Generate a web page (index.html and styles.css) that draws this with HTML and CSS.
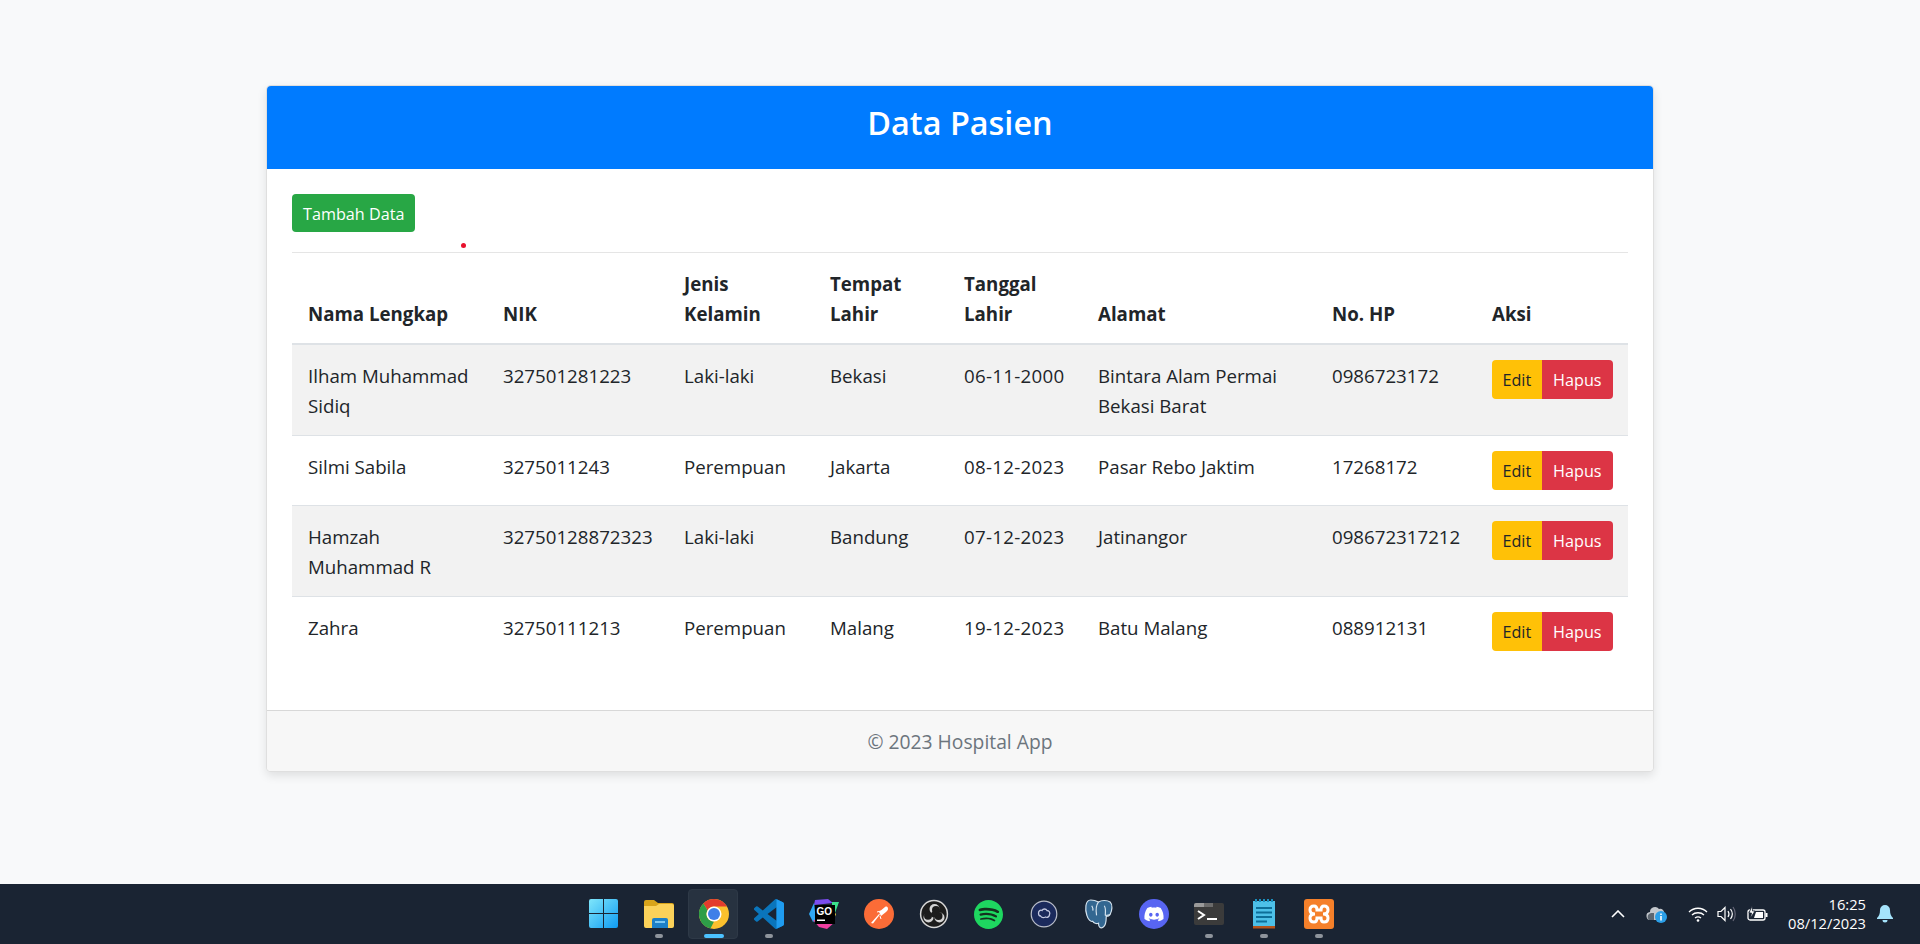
FILE: index.html

```html
<!DOCTYPE html>
<html lang="en">
<head>
  <meta charset="UTF-8">
  <meta name="viewport" content="width=device-width, initial-scale=1.0">
  <title>Data Pasien</title>
  <link rel="stylesheet" href="styles.css">
</head>
<body>
  <main class="content">
    <section class="card">
      <header class="card-header">
        <h2>Data Pasien</h2>
      </header>
      <div class="card-body">
        <a class="btn btn-success" href="#">Tambah Data</a>
        <hr class="divider">
        <table class="data-table">
          <colgroup>
            <col class="col-nama">
            <col class="col-nik">
            <col class="col-jk">
            <col class="col-tempat">
            <col class="col-tanggal">
            <col class="col-alamat">
            <col class="col-hp">
            <col class="col-aksi">
          </colgroup>
          <thead>
            <tr>
              <th>Nama Lengkap</th>
              <th>NIK</th>
              <th>Jenis Kelamin</th>
              <th>Tempat Lahir</th>
              <th>Tanggal Lahir</th>
              <th>Alamat</th>
              <th>No. HP</th>
              <th>Aksi</th>
            </tr>
          </thead>
          <tbody>
            <tr>
              <td>Ilham Muhammad Sidiq</td>
              <td>327501281223</td>
              <td>Laki-laki</td>
              <td>Bekasi</td>
              <td class="tanggal">06-11-2000</td>
              <td>Bintara Alam Permai Bekasi Barat</td>
              <td>0986723172</td>
              <td class="actions"><div class="btn-group"><a class="btn btn-warning" href="#">Edit</a><a class="btn btn-danger" href="#">Hapus</a></div></td>
            </tr>
            <tr>
              <td>Silmi Sabila</td>
              <td>3275011243</td>
              <td>Perempuan</td>
              <td>Jakarta</td>
              <td class="tanggal">08-12-2023</td>
              <td>Pasar Rebo Jaktim</td>
              <td>17268172</td>
              <td class="actions"><div class="btn-group"><a class="btn btn-warning" href="#">Edit</a><a class="btn btn-danger" href="#">Hapus</a></div></td>
            </tr>
            <tr>
              <td>Hamzah Muhammad R</td>
              <td>32750128872323</td>
              <td>Laki-laki</td>
              <td>Bandung</td>
              <td class="tanggal">07-12-2023</td>
              <td>Jatinangor</td>
              <td>098672317212</td>
              <td class="actions"><div class="btn-group"><a class="btn btn-warning" href="#">Edit</a><a class="btn btn-danger" href="#">Hapus</a></div></td>
            </tr>
            <tr>
              <td>Zahra</td>
              <td>32750111213</td>
              <td>Perempuan</td>
              <td>Malang</td>
              <td class="tanggal">19-12-2023</td>
              <td>Batu Malang</td>
              <td>088912131</td>
              <td class="actions"><div class="btn-group"><a class="btn btn-warning" href="#">Edit</a><a class="btn btn-danger" href="#">Hapus</a></div></td>
            </tr>
          </tbody>
        </table>
      </div>
      <footer class="card-footer">© 2023 Hospital App</footer>
    </section>
  </main>

  <span class="cursor-dot"></span>

  <footer class="taskbar">
    <div class="apps">
      <div class="app">
        <svg viewBox="0 0 30 30" width="30" height="30">
          <defs>
            <linearGradient id="win" x1="0" y1="0" x2="1" y2="1"><stop offset="0" stop-color="#7fe6fb"/><stop offset="1" stop-color="#0f9bf2"/></linearGradient>
          </defs>
          <path fill="url(#win)" d="M2 0h12v14H0V2a2 2 0 0 1 2-2zM15 0h12a2 2 0 0 1 2 2v12H15zM0 15h14v14H2a2 2 0 0 1-2-2zM15 15h14v12a2 2 0 0 1-2 2H15z"/>
        </svg>
      </div>
      <div class="app has-pip">
        <svg viewBox="0 0 32 30" width="32" height="30">
          <path fill="#d9a41a" d="M1 3a2 2 0 0 1 2-2h8l4 3h14a2 2 0 0 1 2 2v4H1z"/>
          <path fill="#fcd25a" d="M1 7h12l3-2h13a2 2 0 0 1 2 2v20a2 2 0 0 1-2 2H3a2 2 0 0 1-2-2z"/>
          <path fill="#1c80c8" d="M9 21a2 2 0 0 1 2-2h12a2 2 0 0 1 2 2v8H9z"/>
          <rect x="12" y="22" width="10" height="2" fill="#7cc8f2"/>
        </svg>
      </div>
      <div class="app is-active">
        <svg viewBox="0 0 30 30" width="30" height="30">
          <circle cx="15" cy="15" r="15" fill="#fbc02d"/>
          <path fill="#e33b2e" d="M15 0a15 15 0 0 1 13 7.500H15a7.500 7.500 0 0 0-6.500 3.750L4.400 4.400A15 15 0 0 1 15 0z"/>
          <path fill="#2e9e48" d="M4.400 4.400l4.100 6.850A7.500 7.500 0 0 0 15 22.500l-3.500 7.100A15 15 0 0 1 4.400 4.400z"/>
          <circle cx="15" cy="15" r="7.500" fill="#fff"/>
          <circle cx="15" cy="15" r="6" fill="#3f7fe8"/>
        </svg>
      </div>
      <div class="app has-pip">
        <svg viewBox="0 0 24 24" width="30" height="30">
          <path fill="#0a75bc" d="M23.150 2.587L18.210.21a1.494 1.494 0 0 0-1.705.29l-9.460 8.630-4.120-3.128a.999.999 0 0 0-1.276.057L.327 7.261A1 1 0 0 0 .326 8.740L3.899 12 .326 15.260a1 1 0 0 0 .001 1.479L1.650 17.940a.999.999 0 0 0 1.276.057l4.120-3.128 9.460 8.630a1.492 1.492 0 0 0 1.704.29l4.942-2.377A1.500 1.500 0 0 0 24 20.060V3.939a1.500 1.500 0 0 0-.850-1.352zm-5.146 14.861L10.826 12l7.178-5.448v10.896z"/>
          <path fill="#1f9cf0" d="M18 .15l5.150 2.437A1.500 1.500 0 0 1 24 3.939V20.060a1.500 1.500 0 0 1-.850 1.352L18 23.850z"/>
        </svg>
      </div>
      <div class="app">
        <svg viewBox="0 0 30 30" width="30" height="30">
          <path fill="#7a4df0" d="M6 1l13-1 5 4-19 2z"/>
          <path fill="#2fa8f5" d="M0 15l5-11 2 17-3 2z"/>
          <path fill="#f03fa0" d="M4 21l22 2-8 7-8-2z"/>
          <path fill="#3be08c" d="M23 3l7 0-4 11-3-3z"/>
          <path fill="#f5d63d" d="M24 12l3 3-2 5-1-2z"/>
          <rect x="6" y="6" width="20" height="19" fill="#000"/>
          <text class="go-label" x="7.500" y="15.500">GO</text>
          <rect x="8" y="20.500" width="8" height="1.500" fill="#fff"/>
        </svg>
      </div>
      <div class="app">
        <svg viewBox="0 0 30 30" width="30" height="30">
          <circle cx="15" cy="15" r="15" fill="#fb6c37"/>
          <path fill="#fff" d="M7 24l8-9 1 .5-7 9zM15 13l6-5c2-1 3 0 3 2 0 1-1 2-2 3l-5 4z"/>
          <path fill="none" stroke="#fff" stroke-width="1" d="M16 17l1 3M13 13l4-1"/>
        </svg>
      </div>
      <div class="app">
        <svg viewBox="0 0 30 30" width="30" height="30">
          <circle cx="15" cy="15" r="13.400" fill="#1c1c1c" stroke="#d6d6d6" stroke-width="1.500"/>
          <circle cx="15.500" cy="10" r="5" fill="#d4d4d4"/>
          <circle cx="20.500" cy="18.500" r="5" fill="#d4d4d4"/>
          <circle cx="9.500" cy="18.500" r="5" fill="#d4d4d4"/>
          <circle cx="17" cy="11" r="4" fill="#1c1c1c"/>
          <circle cx="19.500" cy="17" r="4" fill="#1c1c1c"/>
          <circle cx="9" cy="16.800" r="4" fill="#1c1c1c"/>
          <circle cx="15" cy="15.500" r="3" fill="#1c1c1c"/>
        </svg>
      </div>
      <div class="app">
        <svg viewBox="0 0 24 24" width="29" height="29">
          <circle cx="12" cy="12" r="11" fill="#15301f"/>
          <path fill="#1ed760" d="M12 0C5.400 0 0 5.400 0 12s5.400 12 12 12 12-5.400 12-12S18.660 0 12 0zm5.521 17.340c-.240.359-.660.480-1.021.240-2.820-1.740-6.360-2.101-10.561-1.141-.418.122-.779-.179-.899-.539-.120-.421.180-.780.540-.900 4.560-1.021 8.520-.600 11.640 1.320.420.180.479.659.301 1.020zm1.440-3.300c-.301.420-.841.600-1.262.300-3.239-1.980-8.159-2.580-11.939-1.380-.479.120-1.020-.120-1.140-.600-.120-.480.120-1.021.600-1.141C9.600 9.900 15 10.561 18.720 12.840c.361.181.540.780.241 1.200zm.120-3.360C15.240 8.400 8.820 8.160 5.160 9.301c-.600.179-1.200-.181-1.380-.721-.180-.601.180-1.200.720-1.381 4.260-1.260 11.280-1.020 15.721 1.621.539.300.719 1.020.419 1.560-.299.421-1.020.599-1.559.300z"/>
        </svg>
      </div>
      <div class="app">
        <svg viewBox="0 0 30 30" width="30" height="30">
          <circle cx="15" cy="15" r="12.800" fill="#1b2a5c" stroke="#b9bdc9" stroke-width="1.200"/>
          <path fill="none" stroke="#c3c8e0" stroke-width="1.300" d="M9.500 14c0-2 2-3.500 3.500-2.500 1-2 4-2 5 0 2 0 3.500 2 2.500 4 0 2-2 3.500-4 2.500-2 1-4 .5-5-1-1.500 0-2-1.500-2-3z"/>
        </svg>
      </div>
      <div class="app">
        <svg viewBox="0 0 30 32" width="29" height="31">
          <path fill="#336791" stroke="#d5e3ee" stroke-width="1.200" d="M7 1c4 0 6 1 8 2 3-2 9-2 12 0 3 3 2 9 0 13-1 2-3 2-4 2 0 4 0 9-3 11-3 2-5 0-5-4-2 1-5 0-6-2-2 1-5-2-6-6C1 11 1 1 7 1z"/>
          <path fill="none" stroke="#d5e3ee" stroke-width="1.200" d="M15 3c-3 4-3 8-2 14M21 7c2 3 1 7 1 10M8 7c1 2 2 3 1 5M22 17c2 0 4 0 5-1"/>
        </svg>
      </div>
      <div class="app">
        <svg viewBox="0 0 30 30" width="30" height="30">
          <circle cx="15" cy="15" r="15" fill="#5865f2"/>
          <g transform="translate(5.400 5.400) scale(.8)">
            <path fill="#fff" d="M20.317 4.370a19.791 19.791 0 0 0-4.885-1.515.074.074 0 0 0-.079.037c-.211.375-.445.865-.608 1.250-1.845-.276-3.680-.276-5.487 0-.164-.393-.406-.874-.618-1.250a.077.077 0 0 0-.079-.037 19.736 19.736 0 0 0-4.885 1.515.070.070 0 0 0-.032.028C.533 9.046-.319 13.580.099 18.058a.082.082 0 0 0 .031.056c2.053 1.508 4.041 2.423 5.993 3.029a.078.078 0 0 0 .084-.028c.462-.630.873-1.295 1.226-1.994a.076.076 0 0 0-.042-.106c-.653-.248-1.274-.549-1.872-.892a.077.077 0 0 1-.008-.128c.126-.094.252-.192.372-.291a.074.074 0 0 1 .078-.011c3.928 1.793 8.180 1.793 12.061 0a.074.074 0 0 1 .079.010c.120.099.246.198.373.292a.077.077 0 0 1-.007.128 12.299 12.299 0 0 1-1.873.891.077.077 0 0 0-.041.107c.360.698.772 1.363 1.225 1.993a.076.076 0 0 0 .084.029c1.961-.607 3.950-1.522 6.002-3.029a.077.077 0 0 0 .031-.055c.500-5.177-.838-9.674-3.548-13.660a.061.061 0 0 0-.031-.029zM8.020 15.331c-1.183 0-2.157-1.086-2.157-2.419 0-1.333.956-2.419 2.157-2.419 1.211 0 2.176 1.095 2.157 2.419 0 1.333-.956 2.419-2.157 2.419zm7.975 0c-1.183 0-2.157-1.086-2.157-2.419 0-1.333.955-2.419 2.157-2.419 1.211 0 2.176 1.095 2.157 2.419 0 1.333-.946 2.419-2.157 2.419z"/>
          </g>
        </svg>
      </div>
      <div class="app has-pip">
        <svg viewBox="0 0 30 22" width="30" height="22">
          <rect width="30" height="22" rx="2" fill="#3b3b3b"/>
          <path fill="#9a9a9a" d="M2 0h8v4H0V2a2 2 0 0 1 2-2z"/>
          <path fill="#6b6b6b" d="M10 0h9v4h-9z"/>
          <path fill="none" stroke="#fff" stroke-width="2" d="M4 8l6 4-6 4"/>
          <rect x="13" y="15" width="10" height="2" fill="#fff"/>
        </svg>
      </div>
      <div class="app has-pip">
        <svg viewBox="0 0 24 30" width="24" height="30">
          <rect x="1" y="2" width="22" height="27" fill="#4dc0e8"/>
          <rect x="1" y="27" width="22" height="2.500" fill="#b5541c"/>
          <path fill="#0d6f99" d="M4 8h16v2H4zM4 12.500h16v2H4zM4 17h16v2H4zM4 21.500h11v2H4z"/>
          <path fill="#1b8fbd" d="M3 0h2v3H3zM7 0h2v3H7zM11 0h2v3h-2zM15 0h2v3h-2zM19 0h2v3h-2z"/>
        </svg>
      </div>
      <div class="app has-pip">
        <svg viewBox="0 0 30 30" width="30" height="30">
          <rect width="30" height="30" rx="3" fill="#f5802a"/>
          <path fill="none" stroke="#fff" stroke-width="3" d="M11 15c-3 0-5-1-5-4s2-4 4-4 3 2 3 4h4c0-2 1-4 3-4s4 1 4 4-2 4-5 4c3 0 5 1 5 4s-2 4-4 4-3-2-3-4h-4c0 2-1 4-3 4s-4-1-4-4 2-4 5-4z"/>
        </svg>
      </div>
    </div>
    <div class="tray">
      <svg class="tray-chevron" viewBox="0 0 14 8" width="14" height="8"><path fill="none" stroke="#fff" stroke-width="1.600" d="M1 7l6-6 6 6"/></svg>
      <svg class="tray-cloud" viewBox="0 0 22 18" width="22" height="18">
        <path fill="#c3c7cc" d="M5 15a4 4 0 0 1-1-8 5 5 0 0 1 9-3 4 4 0 0 1 5 5v6z"/>
        <path fill="#5d6670" d="M3 15a4 4 0 0 1 2-7h3v7z"/>
        <circle cx="15" cy="12" r="6" fill="#2b9fe8"/>
        <path fill="#fff" d="M14.200 11h1.600v4.500h-1.600zM14.200 8.500h1.600v1.500h-1.600z"/>
      </svg>
      <svg class="tray-wifi" viewBox="0 0 20 16" width="20" height="16">
        <path fill="none" stroke="#fff" stroke-width="1.300" d="M1 6c5-5 13-5 18 0M4 9c3-3 9-3 12 0M7 12c2-1.500 4-1.500 6 0"/>
        <circle cx="10" cy="14.500" r="1.300" fill="#fff"/>
      </svg>
      <svg class="tray-volume" viewBox="0 0 20 16" width="20" height="16">
        <path fill="none" stroke="#fff" stroke-width="1.200" d="M1 5.500h3l4-4v13l-4-4H1z"/>
        <path fill="none" stroke="#fff" stroke-width="1.200" d="M11 5c1.300 2 1.300 4 0 6M13.500 3c2.200 3 2.200 7 0 10"/>
        <path fill="none" stroke="#667" stroke-width="1.200" d="M16 1c3 4 3 10 0 14"/>
      </svg>
      <svg class="tray-battery" viewBox="0 0 21 16" width="21" height="16">
        <rect x="1" y="4" width="17" height="10" rx="2" fill="none" stroke="#fff" stroke-width="1.300"/>
        <rect x="18.500" y="7" width="2" height="4" fill="#fff"/>
        <path fill="#fff" d="M9 6h7v6H7z"/>
        <path fill="#fff" stroke="#1a2433" stroke-width=".8" d="M5 0L2 7h2.500L3.500 12 8 5H5.500z"/>
      </svg>
      <div class="clock">
        <span>16:25</span>
        <span>08/12/2023</span>
      </div>
      <svg class="tray-bell" viewBox="0 0 16 18" width="16" height="18">
        <path fill="#a5e3fb" d="M8 0a5 5 0 0 1 5 5c0 4 1 6 3 8v1H0v-1c2-2 3-4 3-8a5 5 0 0 1 5-5zM5.500 15h5a2.500 2.500 0 0 1-5 0z"/>
      </svg>
    </div>
  </footer>
</body>
</html>
```

FILE: styles.css

```css
* {
  box-sizing: border-box;
}
body {
  margin: 0;
  height: 100vh;
  display: flex;
  flex-direction: column;
  overflow: hidden;
  font-family: 'Open Sans', 'Noto Sans', sans-serif;
  font-size: 18.7px;
  line-height: 30px;
  color: #212529;
  background-color: #f8f9fa;
}
.content {
  flex: 1;
  padding-top: 85px;
}
.card {
  width: 1388px;
  margin: 0 auto;
  background-color: #fff;
  border: 1px solid rgba(0, 0, 0, 0.125);
  border-radius: 5px;
  box-shadow: 0 4px 10px rgba(0, 0, 0, 0.1);
}
.card-header {
  height: 83px;
  padding-bottom: 12px;
  display: flex;
  align-items: center;
  justify-content: center;
  background-color: #007bff;
  border-radius: 4px 4px 0 0;
}
.card-header h2 {
  margin: 0;
  color: #fff;
  font-size: 32.4px;
  font-weight: 600;
  line-height: 38px;
}
.card-body {
  height: 541px;
  padding: 25px 25px 0;
}
.btn {
  display: inline-block;
  height: 39px;
  font-size: 16.2px;
  line-height: 40px;
  text-decoration: none;
  color: #fff;
  border-radius: 4px;
}
.btn-success {
  height: 38px;
  padding: 0 11px;
  background-color: #28a745;
  vertical-align: top;
}
.btn-group {
  display: flex;
}
.btn-warning {
  background-color: #ffc107;
  color: #212529;
  border-radius: 4px 0 0 4px;
  width: 50px;
  text-align: center;
}
.btn-danger {
  background-color: #dc3545;
  border-radius: 0 4px 4px 0;
  width: 72px;
  text-align: center;
}
.divider {
  margin: 20px 0 0;
  border: 0;
  border-top: 1px solid rgba(0, 0, 0, 0.1);
}
.data-table {
  width: 1336px;
  border-collapse: collapse;
  table-layout: fixed;
}
.col-nama { width: 195px; }
.col-nik { width: 181px; }
.col-jk { width: 146px; }
.col-tempat { width: 134px; }
.col-tanggal { width: 134px; }
.col-alamat { width: 234px; }
.col-hp { width: 160px; }
.col-aksi { width: 152px; }
th, td {
  padding: 16px 15px 14px 16px;
  text-align: left;
  vertical-align: top;
  border-top: 1px solid #dee2e6;
}
th {
  vertical-align: bottom;
  font-weight: 700;
  border-top: 0;
  border-bottom: 2px solid #dee2e6;
}
tbody tr:nth-child(odd) {
  background-color: #f2f2f2;
}
.tanggal {
  letter-spacing: 0.3px;
}
td.actions {
  padding-top: 15px;
  padding-bottom: 15px;
}
.card-footer {
  height: 61px;
  border-top: 1px solid rgba(0, 0, 0, 0.125);
  border-radius: 0 0 4px 4px;
  background-color: #f7f7f7;
  color: #6c757d;
  text-align: center;
  font-size: 19.3px;
  line-height: 61px;
}
.cursor-dot {
  position: absolute;
  left: 461px;
  top: 243px;
  width: 5px;
  height: 5px;
  border-radius: 50%;
  background-color: #e8112d;
}
.taskbar {
  flex: none;
  height: 60px;
  display: grid;
  grid-template-columns: 1fr auto 1fr;
  align-items: center;
  background-color: #1a2433;
}
.apps {
  grid-column: 2;
  display: flex;
  align-items: center;
  height: 100%;
  margin-left: 2px;
}
.app {
  position: relative;
  width: 55px;
  height: 100%;
  display: flex;
  align-items: center;
  justify-content: center;
}
.has-pip::after,
.is-active::after {
  content: "";
  position: absolute;
  bottom: 6px;
  left: 50%;
  width: 8px;
  height: 4px;
  margin-left: -4px;
  border-radius: 2px;
  background-color: #8e949c;
}
.is-active::before {
  content: "";
  position: absolute;
  top: 5px;
  bottom: 5px;
  left: 2px;
  right: 3px;
  border-radius: 4px;
  background-color: #273240;
  border: 1px solid #2e3947;
}
.is-active svg {
  position: relative;
}
.is-active::after {
  width: 20px;
  margin-left: -10px;
  background-color: #4cc2ff;
}
.go-label {
  font-family: 'Liberation Sans', sans-serif;
  font-size: 10px;
  font-weight: 700;
  fill: #fff;
}
.tray {
  grid-column: 3;
  display: flex;
  align-items: center;
  justify-content: flex-end;
  height: 100%;
  padding-right: 27px;
  color: #fff;
}
.tray-chevron { margin-right: 21px; }
.tray-cloud { margin-right: 20px; }
.tray-wifi { margin-right: 9px; }
.tray-volume { margin-right: 10px; }
.tray-battery { margin-right: 18px; }
.clock {
  display: flex;
  flex-direction: column;
  align-items: flex-end;
  width: 80px;
  margin-right: 11px;
  font-size: 14.7px;
  line-height: 19.5px;
}
```
